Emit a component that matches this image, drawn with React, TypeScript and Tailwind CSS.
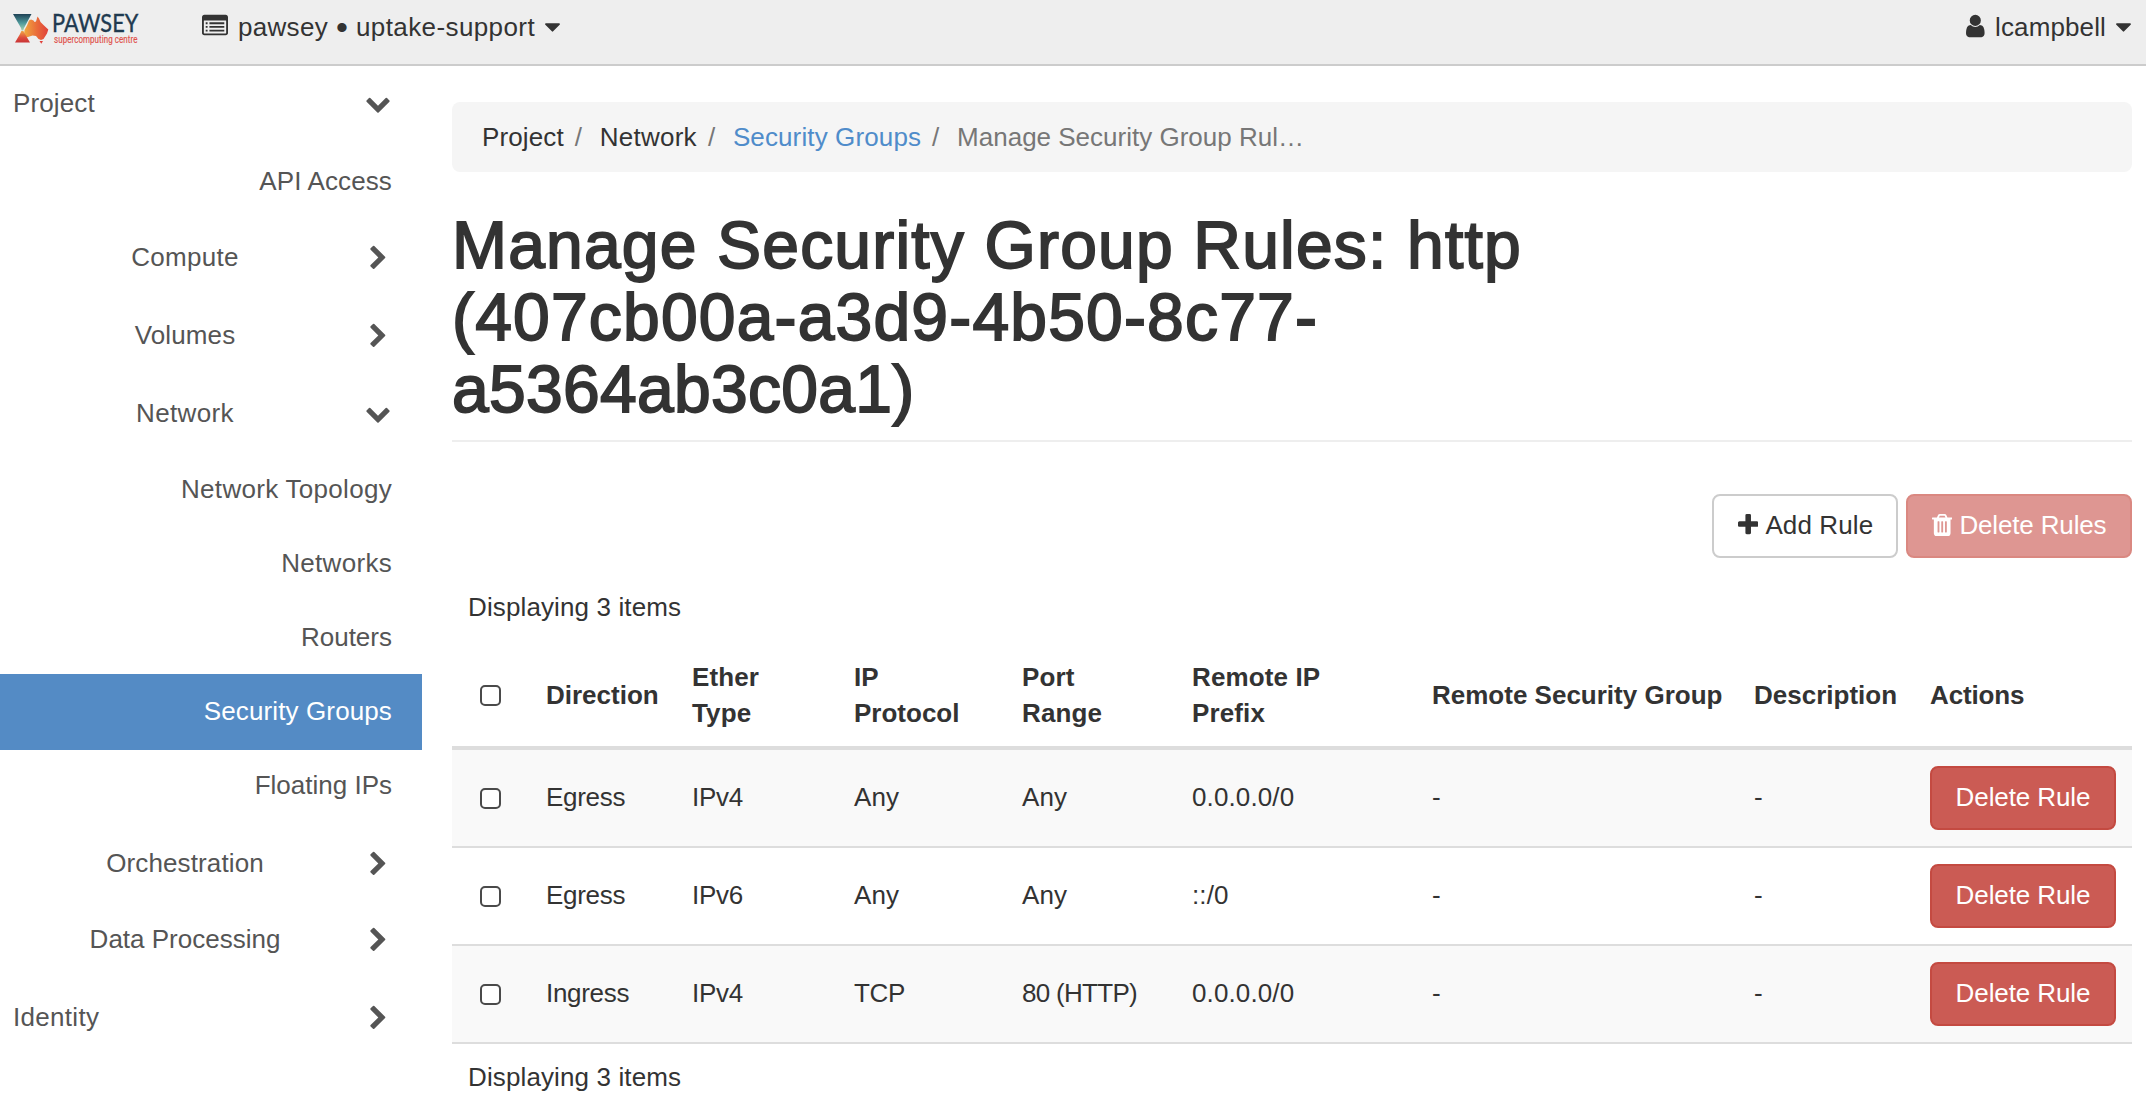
import React from "react";

const icons = {
  right: {
    box: "0 0 1280 1792",
    size: "w-[18.6px] h-[26px]",
    d: "M1107 659l-742 742q-19 19 -45 19t-45 -19l-166 -166q-19 -19 -19 -45t19 -45l531 -531l-531 -531q-19 -19 -19 -45t19 -45l166 -166q19 -19 45 -19t45 19l742 742q19 19 19 45t-19 45z",
  },
  down: {
    box: "0 0 1792 1792",
    size: "w-[26px] h-[26px]",
    d: "M1683 728l-742 -741q-19 -19 -45 -19t-45 19l-742 741q-19 19 -19 45.5t19 45.5l166 165q19 19 45 19t45 -19l531 -531l531 531q19 19 45 19t45 -19l166 -165q19 -19 19 -45.5t-19 -45.5z",
  },
  caret: {
    box: "0 0 1024 1792",
    size: "w-[15px] h-[26px]",
    d: "M1024 832q0 -26 -19 -45l-448 -448q-19 -19 -45 -19t-45 19l-448 448q-19 19 -19 45t19 45t45 19h896q26 0 45 -19t19 -45z",
  },
  user: {
    box: "0 0 1280 1792",
    size: "w-[18.6px] h-[26px]",
    d: "M1280 137q0 -109 -62.5 -187t-150.5 -78h-854q-88 0 -150.5 78t-62.5 187q0 85 8.5 160.5t31.5 152t58.5 131t94 89t134.5 34.5q131 -128 313 -128t313 128q76 0 134.5 -34.5t94 -89t58.5 -131t31.5 -152t8.5 -160.5zM1024 1024q0 -159 -112.5 -271.5t-271.5 -112.5t-271.5 112.5t-112.5 271.5t112.5 271.5t271.5 112.5t271.5 -112.5t112.5 -271.5z",
  },
  plus: {
    box: "0 0 1408 1792",
    size: "w-[20.4px] h-[26px]",
    d: "M1408 800v-192q0 -40 -28 -68t-68 -28h-416v-416q0 -40 -28 -68t-68 -28h-192q-40 0 -68 28t-28 68v416h-416q-40 0 -68 28t-28 68v192q0 40 28 68t68 28h416v416q0 40 28 68t68 28h192q40 0 68 -28t28 -68v-416h416q40 0 68 -28t28 -68z",
  },
  trash: {
    box: "0 0 1408 1792",
    size: "w-[20.4px] h-[26px]",
    d: "M512 160v704q0 14 -9 23t-23 9h-64q-14 0 -23 -9t-9 -23v-704q0 -14 9 -23t23 -9h64q14 0 23 9t9 23zM768 160v704q0 14 -9 23t-23 9h-64q-14 0 -23 -9t-9 -23v-704q0 -14 9 -23t23 -9h64q14 0 23 9t9 23zM1024 160v704q0 14 -9 23t-23 9h-64q-14 0 -23 -9t-9 -23v-704q0 -14 9 -23t23 -9h64q14 0 23 9t9 23zM480 1152h448l-48 117q-7 9 -17 11h-317q-10 -2 -17 -11zM1408 1120v-64q0 -14 -9 -23t-23 -9h-96v-948q0 -83 -47 -143.5t-113 -60.5h-832q-66 0 -113 58.5t-47 141.5v952h-96q-14 0 -23 9t-9 23v64q0 14 9 23t23 9h309l70 167q15 37 54 63t79 26h320q40 0 79 -26t54 -63l70 -167h309q14 0 23 -9t9 -23z",
  },
  list: {
    box: "0 0 1792 1792",
    size: "w-[26px] h-[26px]",
    d: "M256 256h128v128h-128zM256 512h128v128h-128zM256 768h128v128h-128zM512 256h1024v128h-1024zM512 512h1024v128h-1024zM512 768h1024v128h-1024zM1664 160v832q0 13 -9.5 22.5t-22.5 9.5h-1472q-13 0 -22.5 -9.5t-9.5 -22.5v-832q0 -13 9.5 -22.5t22.5 -9.5h1472q13 0 22.5 9.5t9.5 22.5zM1792 1248v-1088q0 -66 -47 -113t-113 -47h-1472q-66 0 -113 47t-47 113v1088q0 66 47 113t113 47h1472q66 0 113 -47t47 -113z",
  },
};

function Icon({ name, className = "" }: { name: keyof typeof icons; className?: string }) {
  const icon = icons[name];
  return (
    <svg viewBox={icon.box} className={`${icon.size} shrink-0 fill-current ${className}`}>
      <path fillRule="evenodd" transform="translate(0 1536) scale(1 -1)" d={icon.d} />
    </svg>
  );
}

function Logo() {
  return (
    <svg viewBox="0 0 176 48" className="h-12 w-[176px] shrink-0">
      <defs>
        <linearGradient id="glassTop" x1="0" y1="0" x2="0" y2="1">
          <stop offset="0" stopColor="#1f4256" />
          <stop offset="0.55" stopColor="#4f9a9c" />
          <stop offset="1" stopColor="#a8d5b0" />
        </linearGradient>
        <linearGradient id="glassBottom" x1="0" y1="0" x2="0" y2="1">
          <stop offset="0" stopColor="#f2a444" />
          <stop offset="0.6" stopColor="#dc4a3c" />
          <stop offset="1" stopColor="#c93437" />
        </linearGradient>
        <linearGradient id="land" x1="0" y1="0" x2="1" y2="0">
          <stop offset="0" stopColor="#f0a93f" />
          <stop offset="0.5" stopColor="#ea6f3a" />
          <stop offset="1" stopColor="#e0403a" />
        </linearGradient>
      </defs>
      <path
        fill="url(#land)"
        d="M15.500 24 18 19.500 20 14.500 22 13.500 24.500 14.500 25.500 16 27 15.500 28.500 10.500 30 12.500 31.500 16 35 19.500 39.300 23.500 38 27.500 34.500 33 32 34 29.500 33 27 30 23.500 29.500 19 31 16 31.500 15 29Z"
      />
      <path fill="#e0403a" d="M30.500 35h3.500l-1.700 2.800z" />
      <path fill="url(#glassTop)" d="M4 8H22.500L15 22 14.200 24.500H12.600L12 22Z" />
      <path fill="url(#glassBottom)" d="M12.400 25H14.400L16 28 21 36.500H6L11 28Z" />
      <text x="43" y="26" fontFamily="Lato" fontSize="25" fill="#1f3a50" stroke="#1f3a50" strokeWidth="0.400" textLength="86.500" lengthAdjust="spacingAndGlyphs">
        PAWSEY
      </text>
      <text x="45" y="36.500" fontFamily="Roboto" fontSize="11.500" fill="#e0524c" stroke="#e0524c" strokeWidth="0.200" textLength="83.500" lengthAdjust="spacingAndGlyphs">
        supercomputing centre
      </text>
    </svg>
  );
}

type NavItem = {
  label: string;
  height: string;
  align: "left" | "center" | "right";
  icon?: "right" | "down";
  active?: boolean;
  tracking?: string;
};

const nav: NavItem[] = [
  { label: "Project", height: "h-[78px]", align: "left", icon: "down" },
  { label: "API Access", height: "h-[76px]", align: "right" },
  { label: "Compute", height: "h-[78px]", align: "center", icon: "right", tracking: "tracking-[0.3px]" },
  { label: "Volumes", height: "h-[78px]", align: "center", icon: "right" },
  { label: "Network", height: "h-[76px]", align: "center", icon: "down", tracking: "tracking-[0.35px]" },
  { label: "Network Topology", height: "h-[74px]", align: "right", tracking: "tracking-[0.3px]" },
  { label: "Networks", height: "h-[74px]", align: "right", tracking: "tracking-[0.3px]" },
  { label: "Routers", height: "h-[74px]", align: "right", tracking: "tracking-[0px]" },
  { label: "Security Groups", height: "h-[76px] -mb-[2px]", align: "right", active: true },
  { label: "Floating IPs", height: "h-[78px]", align: "right", tracking: "tracking-[0px]" },
  { label: "Orchestration", height: "h-[76px]", align: "center", icon: "right" },
  { label: "Data Processing", height: "h-[78px]", align: "center", icon: "right", tracking: "tracking-[0px]" },
  { label: "Identity", height: "h-[78px]", align: "left", icon: "right", tracking: "tracking-[0.3px]" },
];

function Sidebar() {
  return (
    <nav className="w-[422px] shrink-0 text-[#555]">
      {nav.map((item) => (
        <a
          key={item.label}
          className={`flex items-start pt-[19px] pl-[13px] ${item.height} ${item.active ? "bg-[#548bc5] text-white" : ""} ${
            item.icon ? "pr-[31px]" : "pr-[30px]"
          }`}
        >
          <span
            className={`flex-1 ${item.tracking ?? ""} ${
              item.align === "right" ? "text-right" : item.align === "center" ? "pr-[8px] text-center" : ""
            }`}
          >
            {item.label}
          </span>
          {item.icon && (
            <span className="flex w-[26px] justify-center pt-[5px]">
              <Icon name={item.icon} />
            </span>
          )}
        </a>
      ))}
    </nav>
  );
}

const rows = [
  ["Egress", "IPv4", "Any", "Any", "0.0.0.0/0", "-", "-"],
  ["Egress", "IPv6", "Any", "Any", "::/0", "-", "-"],
  ["Ingress", "IPv4", "TCP", "80 (HTTP)", "0.0.0.0/0", "-", "-"],
];

const headings = [
  { label: "Direction", style: "tracking-[0px]" },
  { label: "Ether Type", style: "pr-10" },
  { label: "IP Protocol", style: "pr-10 tracking-[0px]" },
  { label: "Port Range", style: "pr-10" },
  { label: "Remote IP Prefix", style: "pr-20" },
  { label: "Remote Security Group", style: "whitespace-nowrap tracking-[0px]" },
  { label: "Description", style: "tracking-[0px]" },
  { label: "Actions", style: "tracking-[-0.15px]" },
];

function Checkbox() {
  return <input type="checkbox" className="ml-3 block size-[21px] appearance-none rounded-[5px] border-2 border-[#4a4a4a] bg-white" />;
}

function RulesTable() {
  return (
    <table className="w-[1680px] table-fixed border-separate border-spacing-0 text-left">
      <colgroup>
        <col className="w-[78px]" />
        <col className="w-[146px]" />
        <col className="w-[162px]" />
        <col className="w-[168px]" />
        <col className="w-[170px]" />
        <col className="w-[240px]" />
        <col className="w-[322px]" />
        <col className="w-[176px]" />
        <col className="w-[218px]" />
      </colgroup>
      <thead>
        <tr className="h-[108px]">
          <th className="border-b-4 border-[#ddd] pt-[2px] pl-4">
            <Checkbox />
          </th>
          {headings.map((h) => (
            <th key={h.label} className={`border-b-4 border-[#ddd] pt-[2px] pl-4 font-bold ${h.style}`}>
              {h.label}
            </th>
          ))}
        </tr>
      </thead>
      <tbody>
        {rows.map((row, i) => (
          <tr key={i} className="h-[98px] odd:bg-[#f9f9f9]">
            <td className="border-b-2 border-[#ddd] pl-4">
              <Checkbox />
            </td>
            {row.map((cell, j) => (
              <td
                key={j}
                className={`border-b-2 border-[#ddd] pb-[2px] pl-4 ${
                  cell === "80 (HTTP)" ? "tracking-[-0.7px]" : j < 2 || cell === "TCP" ? "tracking-[-0.3px]" : ""
                }`}
              >
                {cell}
              </td>
            ))}
            <td className="border-b-2 border-[#ddd] px-4">
              <button className="block h-16 w-[186px] rounded-lg border-2 border-[#c44a41] bg-[#cb5b54] pb-[2px] tracking-[-0.1px] text-white">
                Delete Rule
              </button>
            </td>
          </tr>
        ))}
      </tbody>
    </table>
  );
}

function Slash() {
  return <span className="w-[36px] pl-[11px] text-[#777]">/</span>;
}

export default function App() {
  return (
    <div className="h-[1112px] w-[2146px] overflow-hidden bg-white font-['Liberation_Sans',Arial,sans-serif] text-[26px] leading-[36px] tracking-[0.12px] text-[#333]">
      <header className="flex h-[66px] items-start border-b-2 border-[#ccc] bg-[#eee]">
        <div className="ml-[9px] pt-[6px]">
          <Logo />
        </div>
        <div className="ml-[17px] flex pt-[9px]">
          <Icon name="list" className="mt-[4px] mr-[10px]" />
          <span className="tracking-[0.3px]">pawsey</span>
          <span className="w-[28px] text-center text-[34px]">•</span>
          <span className="tracking-[0.4px]">uptake-support</span>
          <Icon name="caret" className="mt-[5px] ml-[10px]" />
        </div>
        <div className="mr-[15px] ml-auto flex pt-[9px]">
          <Icon name="user" className="mt-[4px] mr-[10px]" />
          lcampbell
          <Icon name="caret" className="mt-[5px] ml-[10px]" />
        </div>
      </header>
      <div className="flex">
        <Sidebar />
        <main className="ml-[30px] w-[1680px] shrink-0 pt-9">
          <div className="flex h-[70px] rounded-lg bg-[#f5f5f5] pt-[17px] pl-[30px]">
            <span>Project</span>
            <Slash />
            <span className="tracking-[0.25px]">Network</span>
            <Slash />
            <a className="text-[#4f8cca]">Security Groups</a>
            <Slash />
            <span className="tracking-[0px] text-[#777]">Manage Security Group Rul…</span>
          </div>
          <h1 className="h-[270px] w-[1120px] pt-[37px] text-[66px] leading-[72px] font-normal tracking-[1.18px] [-webkit-text-stroke:1.8px_#333]">
            Manage Security Group Rules: http
            <br />
            (407cb00a-a3d9-4b50-8c77-
            <br />
            <span className="tracking-[0.3px]">a5364ab3c0a1)</span>
          </h1>
          <div className="-mt-[2px] h-[2px] bg-[#eee]" />
          <div className="flex justify-end gap-2 pt-[52px]">
            <button className="flex h-16 w-[186px] rounded-lg border-2 border-[#ccc] bg-white pt-[11px] pl-[24px]">
              <Icon name="plus" className="mt-[5px] mr-[7px]" />
              Add Rule
            </button>
            <button className="flex h-16 w-[226px] rounded-lg border-2 border-[#da8881] bg-[#de9692] pt-[11px] pl-[24px] tracking-[-0.15px] text-white">
              <Icon name="trash" className="mt-[5px] mr-[7px]" />
              Delete Rules
            </button>
          </div>
          <p className="mt-[31px] mb-[17px] pl-4">Displaying 3 items</p>
          <RulesTable />
          <p className="mt-[15px] pl-4">Displaying 3 items</p>
        </main>
      </div>
    </div>
  );
}
